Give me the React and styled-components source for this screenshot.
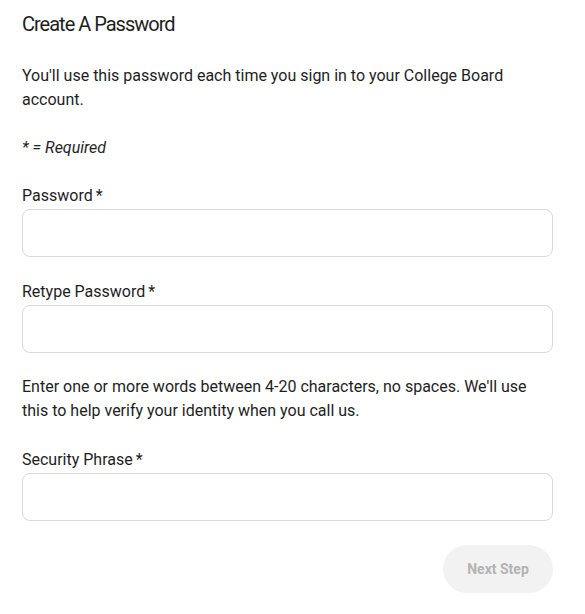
import React from "react";
import styled, { createGlobalStyle } from "styled-components";

const Global = createGlobalStyle`
  html, body { margin: 0; padding: 0; background: #fff; }
  body { font-family: Roboto, "Liberation Sans", Arial, sans-serif; color: #1e1e1e; }
  * { box-sizing: border-box; }
`;

const Page = styled.div`
  display: flex;
  flex-direction: column;
  padding: 8px 32px 20px 22px;
`;

const Title = styled.h1`
  margin: 0;
  font-size: 20px;
  line-height: 32px;
  font-weight: 400;
  letter-spacing: -1px;
  color: #1e1e1e;
`;

const Text = styled.p`
  margin: ${(p) => p.$mt || 24}px 0 0;
  font-size: 16px;
  line-height: 24px;
  color: #1e1e1e;
  font-style: ${(p) => (p.$italic ? "italic" : "normal")};
`;

const Field = styled.div`
  display: flex;
  flex-direction: column;
  margin-top: ${(p) => p.$mt || 24}px;
`;

const Label = styled.label`
  font-size: 16px;
  line-height: 24px;
  color: #1e1e1e;
  margin-bottom: 1px;
  span { margin-left: 3px; }
`;

const Input = styled.input`
  height: 48px;
  width: 100%;
  border: 1px solid #d9d9d9;
  border-radius: 8px;
  padding: 0 12px;
  font: inherit;
  outline: none;
  background: #fff;
`;

const Actions = styled.div`
  display: flex;
  justify-content: flex-end;
  margin-top: 24px;
`;

const Button = styled.button`
  height: 48px;
  width: 110px;
  border: none;
  border-radius: 24px;
  background: #f2f2f2;
  color: #b3b3b3;
  font-family: Roboto, "Liberation Sans", Arial, sans-serif;
  font-size: 14px;
  font-weight: 700;
  cursor: default;
`;

export default function App() {
  return (
    <>
      <Global />
      <Page>
        <Title>Create A Password</Title>
        <Text>
          You'll use this password each time you sign in to your College Board
          account.
        </Text>
        <Text $italic>* = Required</Text>
        <Field>
          <Label>
            Password<span>*</span>
          </Label>
          <Input type="password" />
        </Field>
        <Field $mt={23}>
          <Label>
            Retype Password<span>*</span>
          </Label>
          <Input type="password" />
        </Field>
        <Text $mt={22}>
          Enter one or more words between 4-20 characters, no spaces. We'll use
          this to help verify your identity when you call us.
        </Text>
        <Field $mt={25}>
          <Label>
            Security Phrase<span>*</span>
          </Label>
          <Input type="text" />
        </Field>
        <Actions>
          <Button disabled>Next Step</Button>
        </Actions>
      </Page>
    </>
  );
}
